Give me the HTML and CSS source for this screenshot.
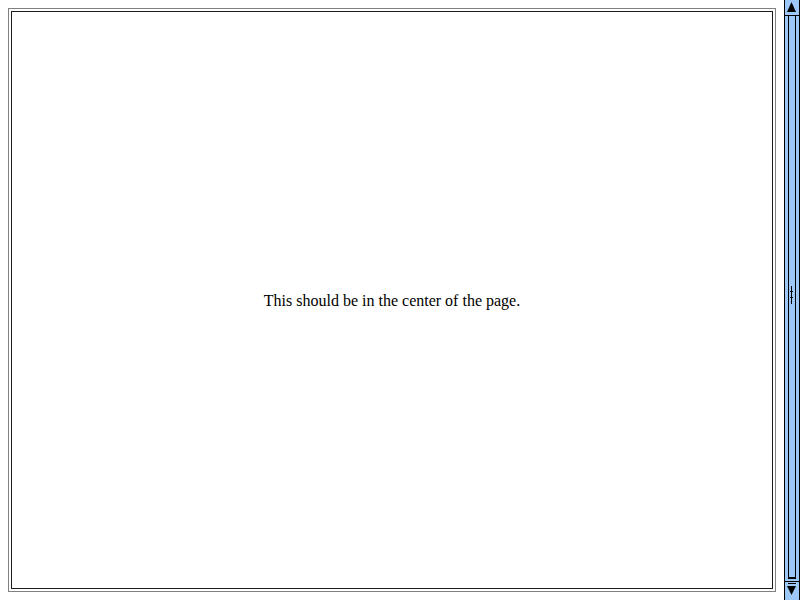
FILE: index.html
```html
<!DOCTYPE html>
<html>
<head>
<meta charset="utf-8">
<link rel="stylesheet" href="styles.css">
</head>
<body>
<div class="window">
  <div class="page">
    <div class="frame">
      <div class="inner">
        <p class="msg">This should be in the center of the page.</p>
      </div>
    </div>
  </div>
  <div class="scrollbar">
    <div class="btn btn-up">
      <svg width="14" height="15" viewBox="0 0 14 15"><polygon points="6.5,2 11,12 2,12" fill="#000"/></svg>
    </div>
    <div class="track">
      <div class="thumb">
        <svg class="grip" width="6" height="18" viewBox="0 0 6 18"><rect x="2" y="0" width="1" height="18" fill="#000"/><rect x="1" y="5" width="3" height="1" fill="#000"/><rect x="1" y="11" width="3" height="1" fill="#000"/></svg>
        <div class="thumb-cap"></div>
      </div>
    </div>
    <div class="btn btn-down">
      <svg width="14" height="18" viewBox="0 0 14 18"><rect x="3" y="1" width="8" height="1" fill="#000"/><polygon points="2,4 11,4 6.5,13" fill="#000"/></svg>
    </div>
  </div>
</div>
</body>
</html>
```
FILE: styles.css
```css
html, body {
  margin: 0;
  padding: 0;
  background: #ffffff;
}

.window {
  display: flex;
  width: 800px;
  height: 600px;
  overflow: hidden;
}

.page {
  flex: 1;
  padding: 8px;
  box-sizing: border-box;
  height: 100%;
}

.frame {
  height: 100%;
  box-sizing: border-box;
  border: 1px solid #808080;
  padding: 2px;
}

.inner {
  height: 100%;
  box-sizing: border-box;
  border: 1px solid #1c1c1c;
  display: flex;
  align-items: center;
  justify-content: center;
}

.msg {
  margin: 0;
  font-family: "Liberation Serif", "Times New Roman", serif;
  font-size: 16px;
  color: #000;
  padding-top: 1px;
}

.scrollbar {
  width: 16px;
  height: 100%;
  box-sizing: border-box;
  background: #9cc7f7;
  border-left: 1px solid #000;
  border-right: 1px solid #000;
  display: flex;
  flex-direction: column;
}

.btn {
  display: flex;
  justify-content: center;
  align-items: flex-start;
}

.btn-up {
  height: 16px;
  box-sizing: border-box;
  border-bottom: 1px solid #000;
}

.btn-down {
  height: 19px;
  box-sizing: border-box;
  border-top: 1px solid #000;
}

.track {
  flex: 1;
  display: flex;
  justify-content: center;
  padding-bottom: 2px;
}

.thumb {
  width: 8px;
  box-sizing: border-box;
  border-left: 1px solid #000;
  border-right: 1px solid #000;
  display: flex;
  flex-direction: column;
  justify-content: flex-end;
  position: relative;
}

.grip {
  position: absolute;
  left: 0;
  top: 50%;
  margin-top: -12px;
}

.thumb-cap {
  height: 2px;
  background: #000;
}
```
